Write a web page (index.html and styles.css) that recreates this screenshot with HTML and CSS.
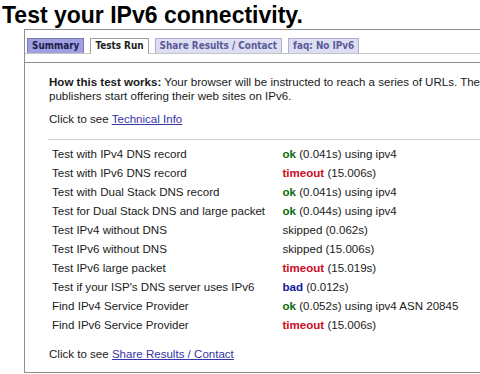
FILE: index.html
```html
<!DOCTYPE html>
<html>
<head>
<meta charset="utf-8">
<link rel="stylesheet" href="styles.css">
</head>
<body>
<h1 class="title">Test your IPv6 connectivity.</h1>
<div class="frame">
  <ul class="tabs">
    <li class="tab tab-summary">Summary</li>
    <li class="tab tab-active">Tests Run</li>
    <li class="tab tab-other">Share Results / Contact</li>
    <li class="tab tab-other">faq: No IPv6</li>
  </ul>
  <div class="content">
    <p class="intro"><b>How this test works:</b> Your browser will be instructed to reach a series of URLs. These URLs are used to determine the state of your IPv6 connectivity before<br>publishers start offering their web sites on IPv6.</p>
    <p class="more">Click to see <a href="#" class="link">Technical Info</a></p>
    <hr class="rule">
    <div class="results">
      <div class="row"><span class="name">Test with IPv4 DNS record</span><span class="res"><b class="ok">ok</b> (0.041s) using ipv4</span></div>
      <div class="row"><span class="name">Test with IPv6 DNS record</span><span class="res"><b class="to">timeout</b> (15.006s)</span></div>
      <div class="row"><span class="name">Test with Dual Stack DNS record</span><span class="res"><b class="ok">ok</b> (0.041s) using ipv4</span></div>
      <div class="row"><span class="name">Test for Dual Stack DNS and large packet</span><span class="res"><b class="ok">ok</b> (0.044s) using ipv4</span></div>
      <div class="row"><span class="name">Test IPv4 without DNS</span><span class="res">skipped (0.062s)</span></div>
      <div class="row"><span class="name">Test IPv6 without DNS</span><span class="res">skipped (15.006s)</span></div>
      <div class="row"><span class="name">Test IPv6 large packet</span><span class="res"><b class="to">timeout</b> (15.019s)</span></div>
      <div class="row"><span class="name">Test if your ISP's DNS server uses IPv6</span><span class="res"><b class="bad">bad</b> (0.012s)</span></div>
      <div class="row"><span class="name">Find IPv4 Service Provider</span><span class="res"><b class="ok">ok</b> (0.052s) using ipv4 ASN 20845</span></div>
      <div class="row"><span class="name">Find IPv6 Service Provider</span><span class="res"><b class="to">timeout</b> (15.006s)</span></div>
    </div>
    <p class="share">Click to see <a href="#" class="link">Share Results / Contact</a></p>
  </div>
</div>
</body>
</html>
```
FILE: styles.css
```css
html, body {
  margin: 0;
  padding: 0;
  overflow: hidden;
  background: #fff;
}
body {
  font-family: "Liberation Sans", Arial, sans-serif;
  font-size: 11.55px;
  color: #1a1a1a;
  width: 480px;
}
.title {
  margin: 0 0 1px 0;
  padding: 2px 0 0 2px;
  font-size: 23px;
  line-height: 26px;
  font-weight: bold;
  color: #000;
  white-space: nowrap;
}
.frame {
  margin-left: 24px;
  width: 900px;
  border: 1px solid #8e8e8e;
  border-right: none;
}
.tabs {
  list-style: none;
  margin: 0;
  padding: 8px 0 0 2px;
  display: flex;
  gap: 6px;
  border-bottom: 1px solid #c4c4c4;
}
.tab {
  font-family: "DejaVu Sans Condensed", "DejaVu Sans", sans-serif;
  font-stretch: condensed;
  font-weight: bold;
  font-size: 9.9px;
  line-height: 14px;
  padding: 0 4px;
  border: 1px solid #a8a8a8;
  border-bottom: none;
  white-space: nowrap;
}
.tab-summary {
  background: #9f9fe2;
  color: #1c1c4a;
  border-color: #7b7bb0;
}
.tab-active {
  background: #fff;
  color: #222;
  border-color: #a0a0a0;
  margin-bottom: -1px;
  padding-bottom: 1px;
}
.tab-other {
  background: #dedef3;
  color: #5a5a98;
  border-color: #aeaed0;
}
.content {
  margin-top: 8px;
  border-top: 1px solid #8e8e8e;
  padding: 12px 0 11px 24px;
}
.content p {
  margin: 0;
  line-height: 14px;
  white-space: nowrap;
}
.more {
  margin-top: 9px !important;
}
.link {
  color: #3535a8;
  text-decoration: underline;
}
.rule {
  margin: 13px 0 5px -1px;
  border: none;
  border-top: 1px solid #cfcfcf;
  height: 0;
  width: 520px;
}
.results {
  display: flex;
  flex-direction: column;
  padding-left: 3px;
}
.row {
  display: grid;
  grid-template-columns: 230.5px auto;
  line-height: 19px;
  white-space: nowrap;
}
.ok { color: #0b6b0b; }
.to { color: #cc0a1e; }
.bad { color: #1414a0; }
.share {
  margin-top: 12px !important;
}
```
